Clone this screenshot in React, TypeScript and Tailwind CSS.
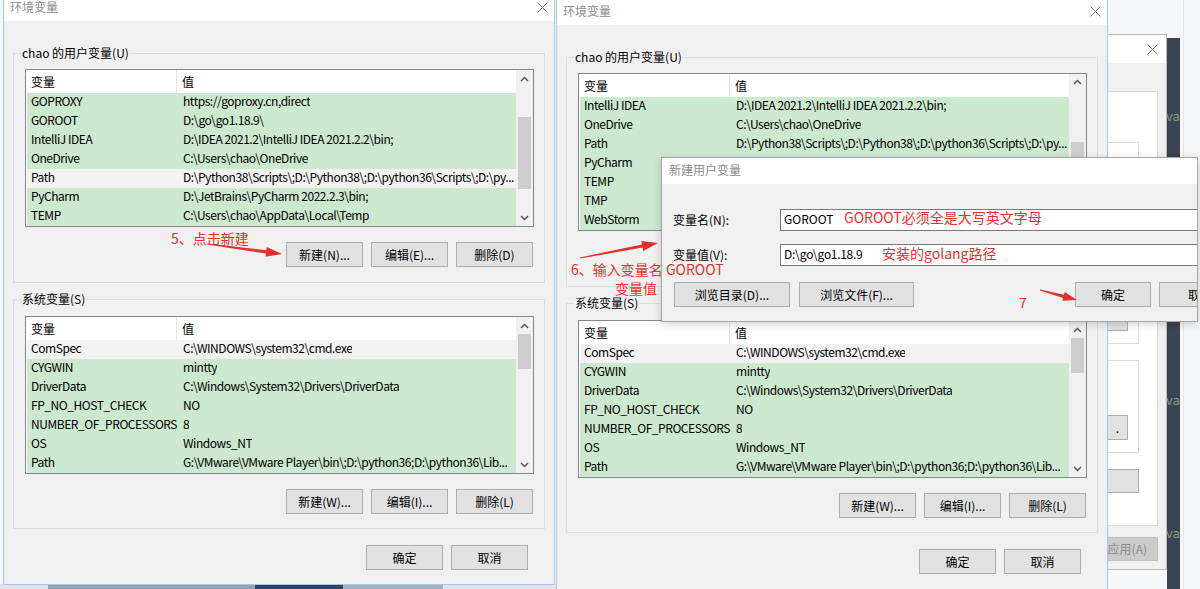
import React from "react";

type Row = { n: string; v: string; s?: boolean };

const userRowsL: Row[] = [
  { n: "GOPROXY", v: "https://goproxy.cn,direct" },
  { n: "GOROOT", v: "D:\\go\\go1.18.9\\" },
  { n: "IntelliJ IDEA", v: "D:\\IDEA 2021.2\\IntelliJ IDEA 2021.2.2\\bin;" },
  { n: "OneDrive", v: "C:\\Users\\chao\\OneDrive" },
  { n: "Path", v: "D:\\Python38\\Scripts\\;D:\\Python38\\;D:\\python36\\Scripts\\;D:\\py...", s: true },
  { n: "PyCharm", v: "D:\\JetBrains\\PyCharm 2022.2.3\\bin;" },
  { n: "TEMP", v: "C:\\Users\\chao\\AppData\\Local\\Temp" },
];

const userRowsR: Row[] = [
  { n: "IntelliJ IDEA", v: "D:\\IDEA 2021.2\\IntelliJ IDEA 2021.2.2\\bin;" },
  { n: "OneDrive", v: "C:\\Users\\chao\\OneDrive" },
  { n: "Path", v: "D:\\Python38\\Scripts\\;D:\\Python38\\;D:\\python36\\Scripts\\;D:\\py..." },
  { n: "PyCharm", v: "D:\\JetBrains\\PyCharm 2022.2.3\\bin;" },
  { n: "TEMP", v: "C:\\Users\\chao\\AppData\\Local\\Temp" },
  { n: "TMP", v: "C:\\Users\\chao\\AppData\\Local\\Temp" },
  { n: "WebStorm", v: "D:\\JetBrains\\WebStorm\\bin;" },
];

const sysRows: Row[] = [
  { n: "ComSpec", v: "C:\\WINDOWS\\system32\\cmd.exe", s: true },
  { n: "CYGWIN", v: "mintty" },
  { n: "DriverData", v: "C:\\Windows\\System32\\Drivers\\DriverData" },
  { n: "FP_NO_HOST_CHECK", v: "NO" },
  { n: "NUMBER_OF_PROCESSORS", v: "8" },
  { n: "OS", v: "Windows_NT" },
  { n: "Path", v: "G:\\VMware\\VMware Player\\bin\\;D:\\python36;D:\\python36\\Lib..." },
];

function XIcon() {
  return (
    <svg width="11" height="11" viewBox="0 0 11 11" className="text-[#7a7a7a]">
      <path d="M0.5 0.5L10.5 10.5M10.5 0.5L0.5 10.5" stroke="currentColor" strokeWidth="1" fill="none" />
    </svg>
  );
}

function Chevron({ up }: { up?: boolean }) {
  return (
    <svg width="9" height="6" viewBox="0 0 9 6">
      <path
        d={up ? "M1 5L4.5 1.5L8 5" : "M1 1L4.5 4.5L8 1"}
        stroke="#505050"
        strokeWidth="1.4"
        fill="none"
      />
    </svg>
  );
}

function Btn({ children, className = "" }: { children: React.ReactNode; className?: string }) {
  return (
    <div
      className={`h-[25px] shrink-0 border border-[#adadad] bg-[#e1e1e1] flex items-center justify-center text-[12px] text-black ${className}`}
    >
      {children}
    </div>
  );
}

function VarList({ rows, thumbCls }: { rows: Row[]; thumbCls: string }) {
  return (
    <div className="h-[158px] border border-[#828790] bg-white flex">
      <div className="flex-1 min-w-0 flex flex-col pl-[1px]">
        <div className="h-[23px] flex shrink-0">
          <div className="w-[150px] pl-[4px] flex items-center border-r border-[#e5e5e5]">变量</div>
          <div className="pl-[5px] flex items-center">值</div>
        </div>
        {rows.map((r, i) => (
          <div
            key={i}
            className={`h-[19px] flex items-center pb-[3px] shrink-0 tracking-[-0.45px] ${r.s ? "bg-[#f2f2f2]" : "bg-[#cce8cf]"}`}
          >
            <div className="w-[151px] shrink-0 pl-[4px] whitespace-nowrap overflow-hidden">{r.n}</div>
            <div className="pl-[5px] whitespace-nowrap overflow-hidden">{r.v}</div>
          </div>
        ))}
      </div>
      <div className="w-[17px] shrink-0 bg-[#f0f0f0] flex flex-col">
        <div className="h-[17px] flex items-center justify-center">
          <Chevron up />
        </div>
        <div className="flex-1 px-[2px]">
          <div className={`bg-[#cdcdcd] ${thumbCls}`} />
        </div>
        <div className="h-[17px] flex items-center justify-center">
          <Chevron />
        </div>
      </div>
    </div>
  );
}

function EnvDialog({
  pos,
  userRows,
  userThumb,
}: {
  pos: string;
  userRows: Row[];
  userThumb: string;
}) {
  return (
    <div className={`absolute w-[552px] bg-[#f0f0f0] border border-[#a9c6e8] flex flex-col ${pos}`}>
      <div className="h-[25px] bg-white flex items-center justify-between pl-[6px] pr-[6px] pb-[3px] shrink-0">
        <span className="text-[12px] text-[#8c8c8c]">环境变量</span>
        <XIcon />
      </div>
      <div className="px-[9px] pt-[24px] flex flex-col">
        <fieldset className="min-w-0 border border-[#dcdcdc] pl-[11px] pr-[10px] pt-[8px] pb-[15px]">
          <legend className="ml-[-4px] px-[1px] leading-[16px]">chao 的用户变量(U)</legend>
          <VarList rows={userRows} thumbCls={userThumb} />
          <div className="flex justify-end gap-[8px] mt-[15px] pr-[1px]">
            <Btn className="w-[77px]">新建(N)...</Btn>
            <Btn className="w-[77px]">编辑(E)...</Btn>
            <Btn className="w-[77px]">删除(D)</Btn>
          </div>
        </fieldset>
        <fieldset className="min-w-0 mt-[8px] border border-[#dcdcdc] pl-[11px] pr-[10px] pt-[9px] pb-[14px]">
          <legend className="ml-[-4px] px-[1px] leading-[16px]">系统变量(S)</legend>
          <VarList rows={sysRows} thumbCls="mt-0 h-[35px]" />
          <div className="flex justify-end gap-[8px] mt-[15px] pr-[1px]">
            <Btn className="w-[77px]">新建(W)...</Btn>
            <Btn className="w-[77px]">编辑(I)...</Btn>
            <Btn className="w-[77px]">删除(L)</Btn>
          </div>
        </fieldset>
        <div className="flex justify-end gap-[8px] mt-[16px] mr-[17px]">
          <Btn className="w-[77px]">确定</Btn>
          <Btn className="w-[77px]">取消</Btn>
        </div>
      </div>
    </div>
  );
}

function arrowPoints(x1: number, y1: number, x2: number, y2: number, head = 16, hw = 5) {
  const dx = x2 - x1;
  const dy = y2 - y1;
  const len = Math.hypot(dx, dy);
  const ux = dx / len;
  const uy = dy / len;
  const px = -uy;
  const py = ux;
  const bx = x2 - ux * head;
  const by = y2 - uy * head;
  const t = 0.6;
  const s = 1.6;
  const pts = [
    [x1 + px * t, y1 + py * t],
    [bx + px * s, by + py * s],
    [bx + px * hw, by + py * hw],
    [x2, y2],
    [bx - px * hw, by - py * hw],
    [bx - px * s, by - py * s],
    [x1 - px * t, y1 - py * t],
  ];
  return pts.map((p) => `${p[0].toFixed(1)},${p[1].toFixed(1)}`).join(" ");
}

function BgWindow() {
  return (
    <div className="absolute left-[1000px] top-[34px] w-[167px] h-[536px] bg-[#f0f0f0] border border-[#bcbcbc] flex flex-col">
      <div className="h-[28px] bg-white flex items-center justify-end pr-[8px] shrink-0">
        <XIcon />
      </div>
      <div className="flex-1 flex flex-col pl-[10px] pr-[8px] pt-[28px]">
        <div className="h-[435px] bg-white border border-[#d9d9d9] flex flex-col pl-[10px] pr-[18px] pt-[50px]">
          <div className="h-[202px] border border-[#dcdcdc] flex flex-col justify-end pb-[12px] pr-[10px]">
            <div className="h-[12px] bg-[#e1e1e1] border border-[#adadad]" />
          </div>
          <div className="mt-[16px] h-[93px] border border-[#dcdcdc] flex flex-col justify-end pb-[12px] pr-[10px]">
            <div className="h-[25px] bg-[#e1e1e1] border border-[#adadad] flex items-center justify-end pr-[8px] text-[12px]">
              .
            </div>
          </div>
          <div className="mt-[16px] h-[24px] bg-[#e1e1e1] border border-[#adadad]" />
        </div>
        <div className="mt-[11px] h-[24px] bg-[#cccccc] border border-[#bfbfbf] flex items-center justify-end pr-[10px] text-[12px] text-[#8a8a8a]">
          应用(A)
        </div>
      </div>
    </div>
  );
}

export default function App() {
  return (
    <div className="relative w-[1200px] h-[589px] overflow-hidden bg-[#f6f7f9] text-[12px] text-black [font-family:'Noto_Sans_CJK_SC','Noto_Sans',sans-serif]">
      {/* bottom strip below left dialog */}
      <div className="absolute left-0 top-[584px] w-[556px] h-[5px] flex">
        <div className="w-[48px] bg-[#dfe4ea]" />
        <div className="w-[207px] bg-[#8fa3b9]" />
        <div className="w-[88px] bg-[#2c4766]" />
        <div className="w-[100px] bg-[#9fb1c4]" />
        <div className="flex-1 bg-[#dfe4ea]" />
      </div>

      {/* dark editor strip at far right */}
      <div className="absolute left-[1167px] top-[38px] w-[13px] h-[551px] bg-[#3b4452]" />
      <div className="absolute left-[1183px] top-0 w-[1px] h-[589px] bg-[#e3e6ea]" />
      <span className="absolute left-[1166px] top-[106px] text-[13px] text-[#8e9a7e]">va</span>
      <span className="absolute left-[1166px] top-[390px] text-[13px] text-[#8e9a7e]">va</span>
      <span className="absolute left-[1166px] top-[523px] text-[13px] text-[#8e9a7e]">va</span>

      <BgWindow />

      <EnvDialog pos="left-[3px] top-[-5px] h-[590px]" userRows={userRowsL} userThumb="mt-[30px] h-[72px]" />
      <EnvDialog pos="left-[556px] top-[-1px] h-[600px]" userRows={userRowsR} userThumb="mt-[51px] h-[72px]" />

      {/* new user variable dialog */}
      <div className="absolute left-[661px] top-[157px] w-[537px] h-[165px] bg-[#f0f0f0] border border-[#a6a6a6] shadow-[0_2px_8px_rgba(0,0,0,0.18)] overflow-hidden flex flex-col">
        <div className="h-[26px] bg-white flex items-center pl-[7px] pb-[2px] shrink-0">
          <span className="text-[12px] text-[#8c8c8c]">新建用户变量</span>
        </div>
        <div className="flex flex-col pt-[25px] pl-[11px]">
          <div className="flex items-center">
            <div className="w-[107px] shrink-0">变量名(N):</div>
            <div className="w-[460px] h-[22px] shrink-0 border border-[#7a7a7a] bg-white flex items-center pl-[3px] pb-[2px]">
              GOROOT
            </div>
          </div>
          <div className="flex items-center mt-[13px]">
            <div className="w-[107px] shrink-0">变量值(V):</div>
            <div className="w-[460px] h-[22px] shrink-0 border border-[#7a7a7a] bg-white flex items-center pl-[3px] pb-[2px] tracking-[-0.3px]">
              D:\go\go1.18.9
            </div>
          </div>
          <div className="flex mt-[16px] pl-[1px]">
            <Btn className="w-[116px]">浏览目录(D)...</Btn>
            <Btn className="w-[115px] ml-[9px]">浏览文件(F)...</Btn>
            <Btn className="w-[76px] ml-[161px]">确定</Btn>
            <Btn className="w-[76px] ml-[8px] justify-start pl-[28px]">取消</Btn>
          </div>
        </div>
      </div>

      {/* red annotations */}
      <span className="absolute left-[171px] top-[228px] text-[14px] leading-[20px] text-[#e3302c] whitespace-nowrap">5、点击新建</span>
      <span className="absolute left-[571px] top-[259px] text-[14px] leading-[20px] text-[#e3302c] whitespace-nowrap">6、输入变量名 GOROOT</span>
      <span className="absolute left-[615px] top-[278px] text-[14px] leading-[20px] text-[#e3302c] whitespace-nowrap">变量值</span>
      <span className="absolute left-[1019px] top-[292px] text-[14px] leading-[20px] text-[#e3302c]">7</span>
      <span className="absolute left-[844px] top-[207px] text-[14px] leading-[20px] text-[#e3302c] whitespace-nowrap">GOROOT必须全是大写英文字母</span>
      <span className="absolute left-[882px] top-[243px] text-[14px] leading-[20px] text-[#e3302c] whitespace-nowrap">安装的golang路径</span>

      <svg className="absolute left-0 top-0 pointer-events-none" width="1200" height="589">
        <polygon points={arrowPoints(207, 244, 282, 254)} fill="#e3302c" />
        <polygon points={arrowPoints(580, 258, 658, 243)} fill="#e3302c" />
        <polygon points={arrowPoints(1040, 290, 1077, 300, 14, 4.5)} fill="#e3302c" />
      </svg>
    </div>
  );
}
